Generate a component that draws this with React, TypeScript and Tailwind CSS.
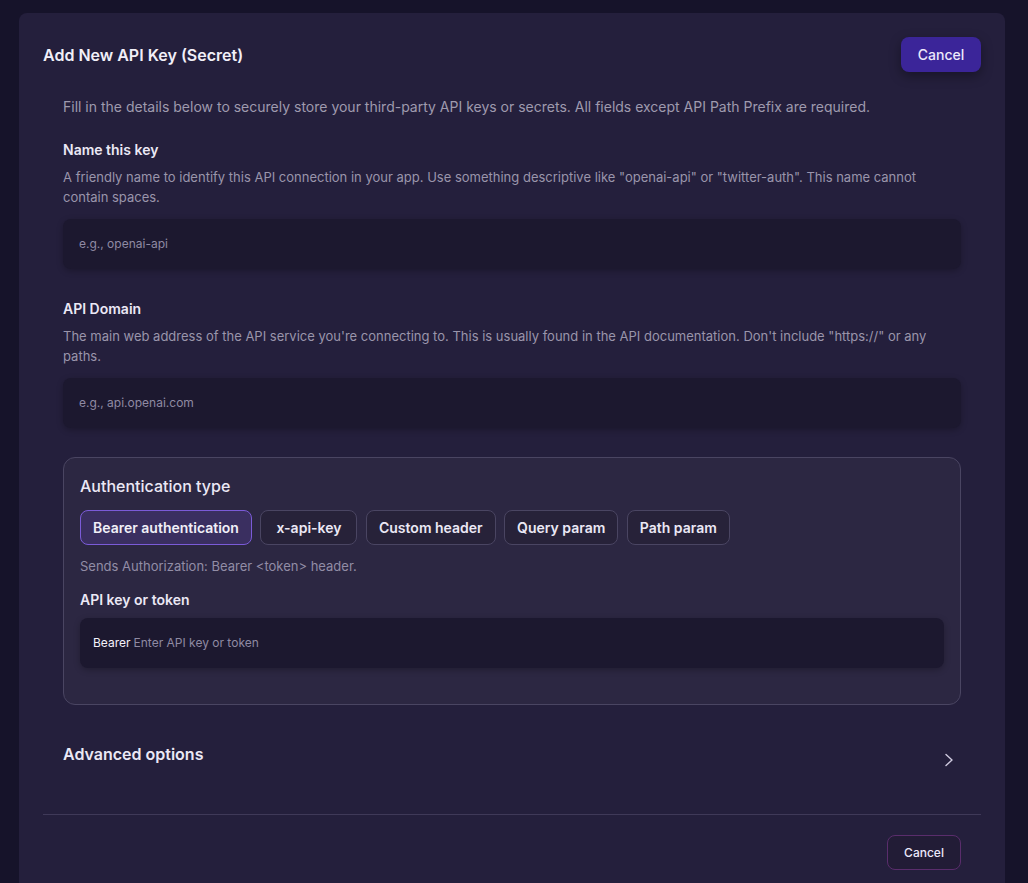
import React from "react";

const font = { fontFamily: "Inter, 'Noto Sans', sans-serif" };

function Field({ label, help, placeholder }: { label: string; help: string; placeholder: string }) {
  return (
    <div className="flex flex-col">
      <div className="text-[14px] leading-5 font-semibold text-[#ebe8f5]">{label}</div>
      <div className="mt-[7px] text-[13px] leading-5 text-[#9a95ab]">{help}</div>
      <div className="mt-3 h-[50px] rounded-lg bg-[#1c182f] shadow-[0_2px_6px_rgba(0,0,0,0.25)] flex items-center px-4 text-[12px] text-[#8f8aa3]">
        {placeholder}
      </div>
    </div>
  );
}

export default function App() {
  const chips = [
    { t: "Bearer authentication", p: "px-3" },
    { t: "x-api-key", p: "px-[15px]" },
    { t: "Custom header", p: "px-3" },
    { t: "Query param", p: "px-[12px]" },
    { t: "Path param", p: "px-3" },
  ];
  return (
    <div style={font} className="min-h-[883px] bg-[#16132a] pl-[19px] pr-[23px] pt-[13px] overflow-hidden">
      <div className="rounded-t-lg bg-[#241f3c] px-6 pt-6 pb-10 min-h-[870px]">
        <div className="flex items-center justify-between h-[35px]">
          <div className="text-[16px] font-semibold text-[#f1eff8]">Add New API Key (Secret)</div>
          <button className="h-[35px] w-[80px] rounded-lg bg-[#3b2599] text-[14px] font-medium text-[#ece8fb] shadow-[0_4px_12px_rgba(0,0,0,0.35)]">
            Cancel
          </button>
        </div>

        <div className="px-5">
          <div className="mt-[25px] text-[14px] leading-5 text-[#9f9aae]">
            Fill in the details below to securely store your third-party API keys or secrets. All fields except API Path Prefix are required.
          </div>

          <div className="mt-[23px]">
            <Field
              label="Name this key"
              help={'A friendly name to identify this API connection in your app. Use something descriptive like "openai-api" or "twitter-auth". This name cannot contain spaces.'}
              placeholder="e.g., openai-api"
            />
          </div>
          <div className="mt-[30px]">
            <Field
              label="API Domain"
              help={'The main web address of the API service you\'re connecting to. This is usually found in the API documentation. Don\'t include "https://" or any paths.'}
              placeholder="e.g., api.openai.com"
            />
          </div>

          <div className="mt-[29px] rounded-xl border border-[#4a4562] bg-[#2c2742] pl-4 pr-4 pt-4 pb-9">
            <div className="text-[16px] leading-6 font-medium text-[#ebe8f5]">Authentication type</div>
            <div className="mt-3 flex gap-[8.5px]">
              {chips.map((c, i) => (
                <div
                  key={c.t}
                  className={
                    i === 0
                      ? "h-[35px] px-3 rounded-lg border border-[#7b5bd8] bg-[#3a2f60] flex items-center text-[14px] font-semibold text-[#f1eff8]"
                      : "h-[35px] rounded-lg border border-[#4a4562] bg-[#272239] flex items-center text-[14px] font-semibold text-[#ebe8f5] " + c.p
                  }
                >
                  {c.t}
                </div>
              ))}
            </div>
            <div className="mt-[11px] text-[13px] leading-5 text-[#928da6]">Sends Authorization: Bearer &lt;token&gt; header.</div>
            <div className="mt-[14px] text-[14px] leading-5 font-semibold text-[#ebe8f5]">API key or token</div>
            <div className="mt-2 h-[50px] rounded-lg bg-[#1c182f] shadow-[0_2px_6px_rgba(0,0,0,0.25)] flex items-center px-[13px] text-[12px]">
              <span className="text-[#f4f2fa]">Bearer</span>
              <span className="ml-[3px] text-[#8f8aa3]">Enter API key or token</span>
            </div>
          </div>

          <div className="mt-[37px] flex items-start justify-between h-[60px]">
            <div className="text-[16px] leading-6 font-semibold text-[#ebe8f5]">Advanced options</div>
            <svg className="mt-[11px] mr-[6px]" width="12" height="14" viewBox="0 0 12 14" fill="none">
              <path d="M3 1.5 L9 7 L3 12.5" stroke="#cfcadf" strokeWidth="1.4" strokeLinecap="round" strokeLinejoin="round" />
            </svg>
          </div>
        </div>

        <div className="mt-[12px] h-px bg-[#3f3958]" />

        <div className="mt-5 flex justify-end pr-5">
          <button className="h-[35px] w-[74px] rounded-lg border border-[#5a2d6c] bg-[#221c36] text-[12px] font-medium text-[#ece8fb]">
            Cancel
          </button>
        </div>
      </div>
    </div>
  );
}
